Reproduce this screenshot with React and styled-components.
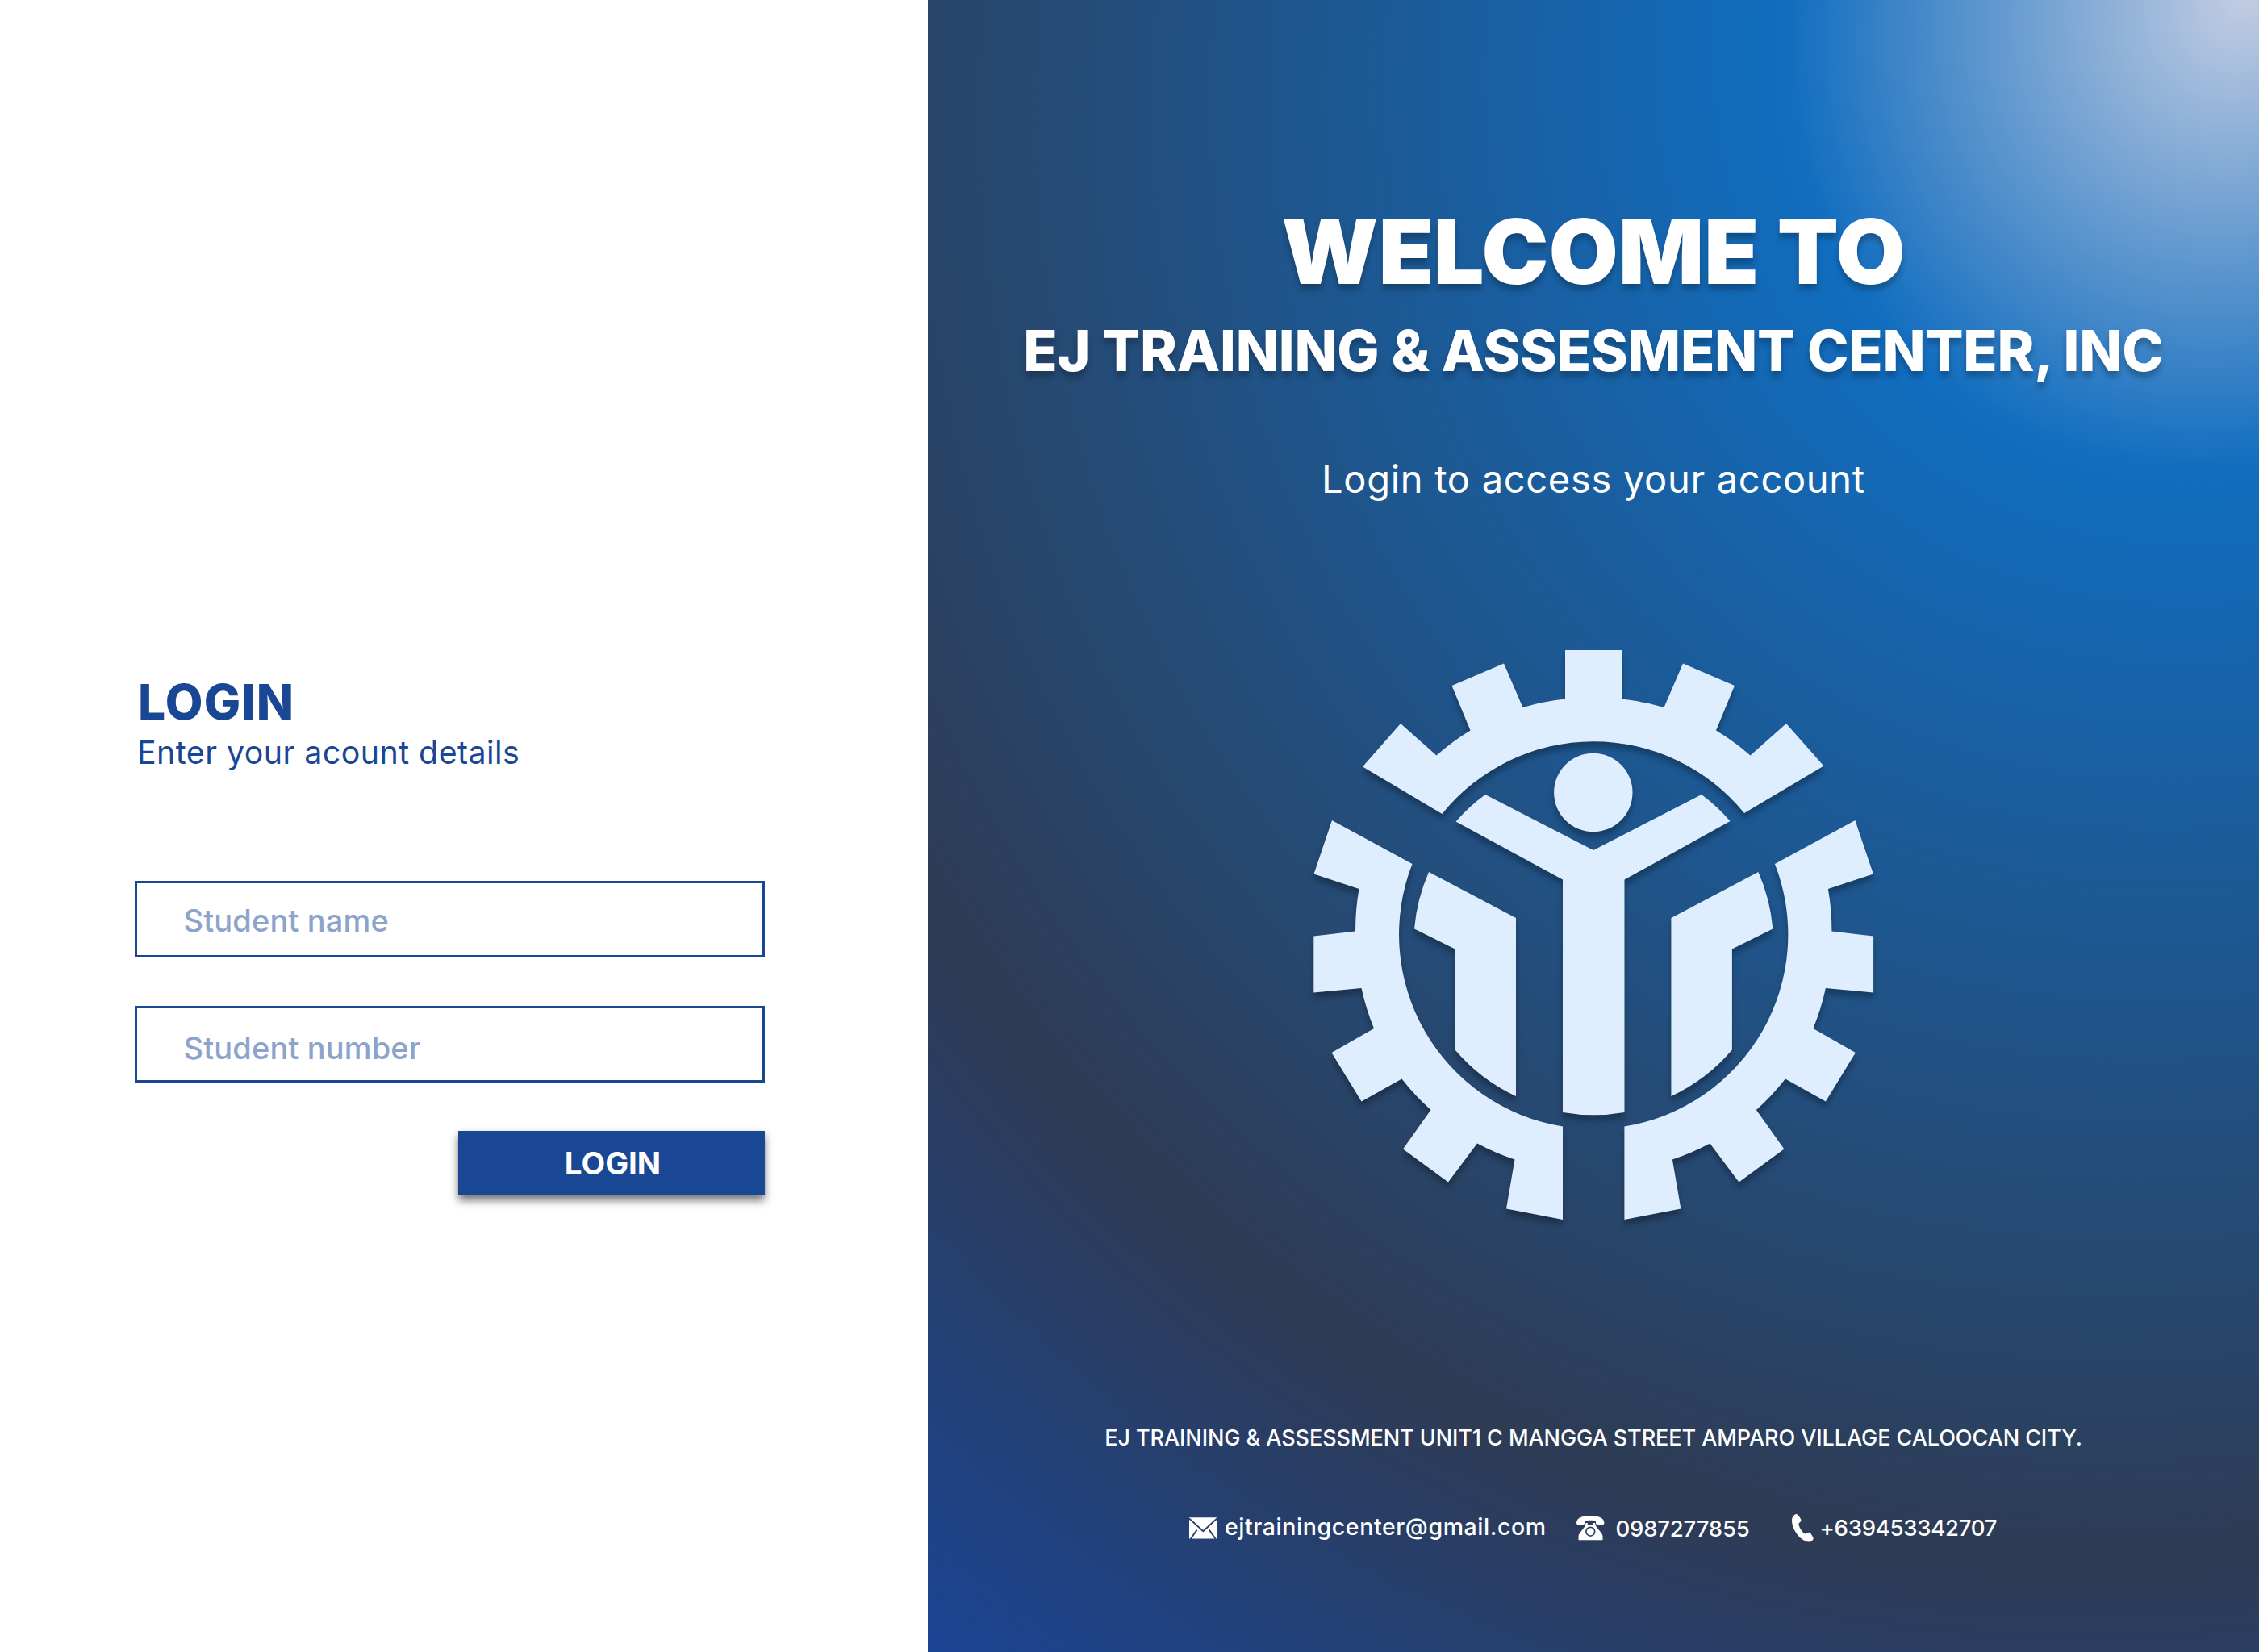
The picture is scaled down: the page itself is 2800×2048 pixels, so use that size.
import React from "react";
import styled, { createGlobalStyle } from "styled-components";

const GlobalStyle = createGlobalStyle`
  *, *::before { box-sizing: border-box; }
  body { margin: 0; background: #fff; font-family: "Inter", "Liberation Sans", sans-serif; }
  h1, h2, p { margin: 0; }
`;

const Page = styled.div`
  display: grid;
  grid-template-columns: 1150px 1fr;
  width: 2800px;
  height: 2048px;
  overflow: hidden;
`;

const LoginPanel = styled.main`
  display: flex;
  flex-direction: column;
  padding: 834.5px 0 0 167px;
  background: #fff;
`;

const FormHeader = styled.header`
  padding-left: 3px;
  color: #1a4794;
`;

const FormTitle = styled.h2`
  padding-left: 1px;
  font-size: 60.5px;
  font-weight: 800;
  line-height: 70px;
  letter-spacing: 1.2px;
`;

const FormHint = styled.p`
  margin-top: 6px;
  font-size: 39.3px;
  font-weight: 400;
  line-height: 44px;
  letter-spacing: 0.48px;
`;

const Form = styled.form`
  display: flex;
  flex-direction: column;
  width: 781px;
  margin-top: 137.5px;
  gap: 60px;
`;

const Field = styled.input`
  width: 100%;
  height: 95px;
  padding: ${({ $drop }) => $drop}px 20px 0 57.5px;
  border: 3px solid #1a4794;
  border-radius: 0;
  outline: none;
  background: transparent;
  color: #1a4794;
  font: 500 38px "Inter", "Liberation Sans", sans-serif;
  letter-spacing: 0.15px;

  &::placeholder {
    color: #8da3ca;
    opacity: 1;
  }
`;

const SubmitButton = styled.button`
  align-self: flex-end;
  width: 380px;
  height: 80px;
  padding: 0 0 0 3px;
  border: 0;
  background: #1a4794;
  box-shadow: 0 6px 10px rgba(0, 0, 0, 0.55);
  color: #fff;
  font: 700 38.5px "Inter", "Liberation Sans", sans-serif;
`;

const WelcomePanel = styled.section`
  position: relative;
  isolation: isolate;
  display: flex;
  flex-direction: column;
  align-items: center;
  overflow: hidden;
  padding-top: 251.5px;
  color: #fff;

  &::before {
    content: "";
    position: absolute;
    z-index: -1;
    top: -2700px;
    right: -2680px;
    width: 5400px;
    height: 5400px;
    transform: rotate(-53deg);
    background: radial-gradient(
      2620px 2370px at center,
      #c1cce2 0%,
      #116dbf 23.1%,
      #2e3b54 76.4%,
      #1a4595 100%
    );
  }
`;

const Welcome = styled.h1`
  font-size: 111px;
  font-weight: 900;
  line-height: 120px;
  letter-spacing: 0.17px;
  text-shadow: 0 7px 7px rgba(0, 0, 0, 0.25);
`;

const CenterName = styled.h2`
  margin-top: 23px;
  font-size: 69.5px;
  font-weight: 800;
  line-height: 80px;
  letter-spacing: -0.22px;
  white-space: nowrap;
  text-shadow: 0 7px 7px rgba(0, 0, 0, 0.25);
`;

const Tagline = styled.p`
  margin-top: 89.5px;
  font-size: 47px;
  font-weight: 400;
  line-height: 60px;
  letter-spacing: 0.7px;
`;

const Emblem = styled.svg`
  display: block;
  flex: none;
  width: 750px;
  height: 740px;
  margin-top: 156px;
  overflow: visible;
  fill: #deeeff;
  filter: drop-shadow(0 7px 3.5px rgba(0, 0, 0, 0.28));
`;

const Address = styled.p`
  margin-top: 242.5px;
  font-size: 27px;
  font-weight: 500;
  line-height: 40px;
  letter-spacing: -0.07px;
  white-space: nowrap;
`;

const Contacts = styled.div`
  display: grid;
  grid-template-columns: 479.5px 267.5px auto;
  align-self: flex-start;
  margin: 69.5px 0 0 324px;
`;

const Contact = styled.div`
  display: flex;
  align-items: center;
  gap: ${({ $gap }) => $gap}px;
  height: 44px;
`;

const ContactText = styled.span`
  margin-top: ${({ $shift }) => $shift}px;
  font-size: ${({ $size }) => $size}px;
  font-weight: 500;
  line-height: 40px;
  letter-spacing: ${({ $spacing }) => $spacing}px;
  white-space: nowrap;
`;

const Icon = styled.svg`
  display: block;
  flex: none;
  fill: #fff;
`;

function EmblemSide() {
  return (
    <>
      <path d="M51 237 L150.5 291 A241 241 0 0 0 337 616.5 V732 L267 718.5 L277.5 657.5 A295 295 0 0 1 231 637.5 L195 685.5 L139 644.5 L173.5 596 A295 295 0 0 1 137.5 557.5 L87.5 585.5 L50.5 525 L103 495 A295 295 0 0 1 87.5 445 L28.3 450.5 V380.5 L80 374.5 A295 295 0 0 1 84.5 322 L28.5 303.5 Z" />
      <path d="M171 301 L279 358 V579 A222 222 0 0 1 203.5 521.5 V396.5 L153 371.5 A222 222 0 0 1 171 301 Z" />
    </>
  );
}

function Gear() {
  return (
    <Emblem viewBox="0 0 750 740">
      <path d="M340 26 H410.4 V86.5 A295 295 0 0 1 462.5 97 L486 42.5 L550 70 L527 125.5 A295 295 0 0 1 569.5 156.5 L614 117 L660.5 169.5 L562 228 A241 241 0 0 0 187.5 229 L89 170.5 L136 117 L180.5 156.5 A295 295 0 0 1 222.5 125.5 L199.5 70 L264 42.5 L287.5 97 A295 295 0 0 1 340 86.5 Z" />
      <circle cx="374.8" cy="202.5" r="48.7" />
      <path d="M241 205 L375 274 L509 205 A222 222 0 0 1 544.5 238 L413.5 310.5 V599 A222 222 0 0 1 337 599 V310.5 L204.5 238.5 A222 222 0 0 1 241 205 Z" />
      <EmblemSide />
      <g transform="translate(750.4 0) scale(-1 1)">
        <EmblemSide />
      </g>
    </Emblem>
  );
}

function MailIcon() {
  return (
    <Icon width="35" height="27" viewBox="0 0 35 27">
      <path d="M0 0.3H34.4V26.6H0Z" />
      <path d="M0 1.5L17.3 17.2L34.4 1.5M1.6 27L9.6 15.6M32.8 27L24.8 15.6" fill="none" stroke="#27406e" strokeWidth="1.9" />
    </Icon>
  );
}

function TelephoneIcon() {
  return (
    <Icon width="35" height="31" viewBox="0 0 35 31">
      <path d="M0 8.5C.5 1.5 10 0 17.2 0S34 1.5 34.4 8.5V9c0 1.5-.8 2-2 2h-6.4c-1.5 0-2-.7-2-2V7.2C21 5.4 13.5 5.4 10.5 7.2V9c0 1.3-.6 2-2 2H2C.8 11 0 10.5 0 9Z" />
      <path d="M11.6 9h2.2v3h7V9H23c.3 3 1.7 5 4.2 8s5.3 6 5.3 8.5V30.3h-30V25.5c0-2.5 2.5-5 5.2-8.5s3.7-5 3.9-8Z" />
      <circle cx="17.3" cy="19.7" r="5.4" fill="none" stroke="#2b3d61" strokeWidth="1.7" />
    </Icon>
  );
}

function HandsetIcon() {
  return (
    <Icon width="27" height="35" viewBox="0 0 27 35">
      <path d="M0 8C0 3 3 .5 5.5 0C7.5 0 10 4 11.4 7C12 9 10 10 8.5 11.5C8 15 12 21.5 16 24.5C18 24.5 20 22 22 23C24 24 26 28 26.7 30C26.5 32.5 23.5 34.8 21 34.6C10 33 0 19 0 8Z" />
    </Icon>
  );
}

export default function App() {
  return (
    <>
      <GlobalStyle />
      <Page>
        <LoginPanel>
          <FormHeader>
            <FormTitle>LOGIN</FormTitle>
            <FormHint>Enter your acount details</FormHint>
          </FormHeader>
          <Form onSubmit={(event) => event.preventDefault()}>
            <Field type="text" placeholder="Student name" $drop={3} />
            <Field type="text" placeholder="Student number" $drop={9} />
            <SubmitButton type="submit">LOGIN</SubmitButton>
          </Form>
        </LoginPanel>
        <WelcomePanel>
          <Welcome>WELCOME TO</Welcome>
          <CenterName>EJ TRAINING &amp; ASSESMENT CENTER, INC</CenterName>
          <Tagline>Login to access your account</Tagline>
          <Gear />
          <Address>EJ TRAINING &amp; ASSESSMENT UNIT1 C MANGGA STREET AMPARO VILLAGE CALOOCAN CITY.</Address>
          <Contacts>
            <Contact $gap={9}>
              <MailIcon />
              <ContactText $size={28.5} $spacing={0.58} $shift={-3}>ejtrainingcenter@gmail.com</ContactText>
            </Contact>
            <Contact $gap={14}>
              <TelephoneIcon />
              <ContactText $size={27.5} $spacing={-0.19} $shift={2}>0987277855</ContactText>
            </Contact>
            <Contact $gap={7.5}>
              <HandsetIcon />
              <ContactText $size={27.5} $spacing={-0.25} $shift={-1}>+639453342707</ContactText>
            </Contact>
          </Contacts>
        </WelcomePanel>
      </Page>
    </>
  );
}
